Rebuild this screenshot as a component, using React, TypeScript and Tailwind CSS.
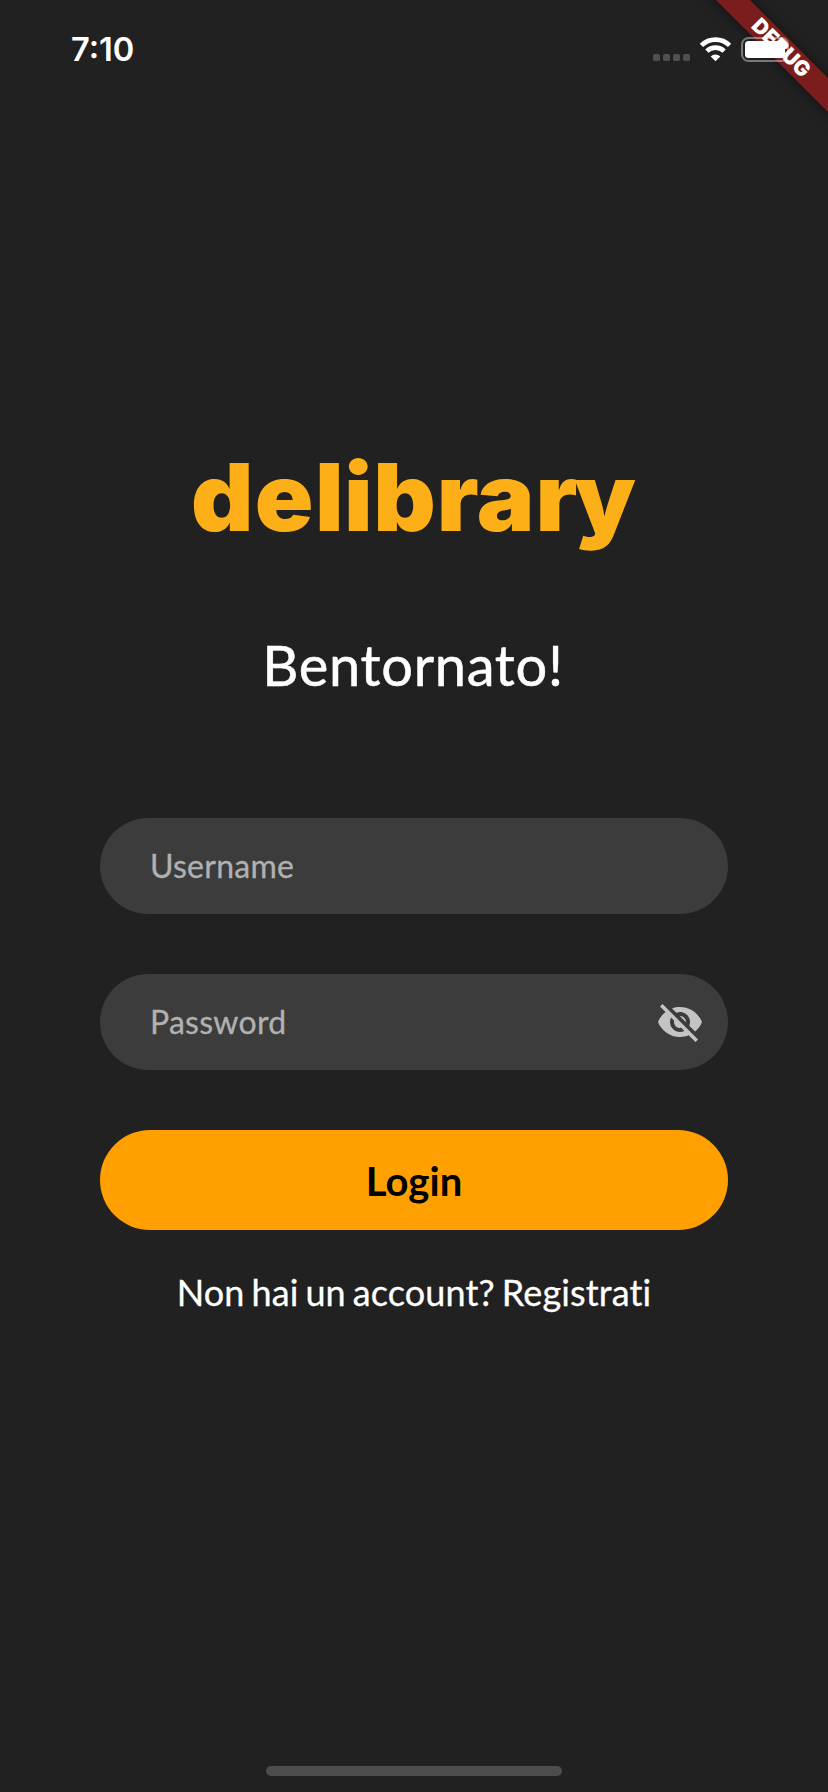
import type { ReactNode } from "react";

const LOGO_LETTERS = [
  { char: "d", x: 185.4 },
  { char: "e", x: 247.3 },
  { char: "l", x: 305.8 },
  { char: "i", x: 334 },
  { char: "b", x: 362.3 },
  { char: "r", x: 424.1 },
  { char: "a", x: 462.9 },
  { char: "r", x: 519.9 },
  { char: "y", x: 557.6 },
];

function StatusIcons() {
  return (
    <svg className="h-16 w-50" viewBox="628 20 200 64" aria-hidden="true">
      {[653, 663, 673, 683].map((x) => (
        <rect key={x} x={x} y="54" width="7" height="7" rx="1.8" fill="#505050" />
      ))}
      <g fill="none" stroke="#fff" strokeWidth="4.6">
        <path d="M701.4 45.4a20 20 0 0 1 28.200 0" />
        <path d="M706.9 51.2a12.2 12.2 0 0 1 17.200 0" />
      </g>
      <path d="M715.5 61.2l-4.800-4.700a6.900 6.900 0 0 1 9.600 0z" fill="#fff" />
      <rect x="742" y="38" width="46" height="23" rx="6.5" fill="none" stroke="#fff" strokeOpacity=".4" strokeWidth="2" />
      <path d="M790.5 45.5c3.600 1.300 3.600 7 0 8.300z" fill="#fff" fillOpacity=".4" />
      <rect x="745" y="41" width="40" height="17" rx="3.5" fill="#fff" />
    </svg>
  );
}

function DebugBanner() {
  return (
    <div className="pointer-events-none absolute top-0 right-0 size-40 overflow-hidden">
      <div className="absolute top-[35.5px] left-[-7.5px] flex h-6 w-[240px] rotate-45 items-center justify-center bg-[#b71c1c]/61 font-['Inter'] text-[21px] font-black text-white shadow-[0_0_12px_rgba(0,0,0,0.5)]">
        DEBUG
      </div>
    </div>
  );
}

function Logo() {
  return (
    <svg className="h-[130px] w-full" viewBox="0 440 828 130" role="img" aria-label="delibrary">
      <text
        transform="scale(1.03 1)"
        x={LOGO_LETTERS.map((l) => l.x).join(" ")}
        y="531"
        fill="#fdaf17"
        className="font-['Inter'] text-[94px] font-black"
      >
        {LOGO_LETTERS.map((l) => l.char).join("")}
      </text>
    </svg>
  );
}

function Field({ label, children }: { label: string; children?: ReactNode }) {
  return (
    <div className="flex h-24 items-center justify-between rounded-full bg-[#3c3c3c] pr-6 pl-[50px] text-[32px] tracking-[0.25px] text-[#b1b1b1] [-webkit-text-stroke:0.3px]">
      <span>{label}</span>
      {children}
    </div>
  );
}

function VisibilityOff() {
  return (
    <svg className="size-12 text-[#c4c4c4]" viewBox="0 0 24 24" fill="currentColor" aria-hidden="true">
      <path d="M12 7c2.760 0 5 2.240 5 5 0 .650-.130 1.260-.360 1.830l2.920 2.920c1.510-1.260 2.700-2.890 3.430-4.750-1.730-4.390-6-7.500-11-7.500-1.400 0-2.740.250-3.980.700l2.160 2.160C10.740 7.130 11.350 7 12 7zM2 4.270l2.280 2.280.460.460C3.080 8.300 1.780 10.020 1 12c1.730 4.390 6 7.500 11 7.500 1.550 0 3.030-.300 4.380-.840l.420.420L19.730 22 21 20.730 3.270 3 2 4.270zM7.530 9.800l1.550 1.550c-.050.210-.080.430-.080.650 0 1.660 1.340 3 3 3 .220 0 .440-.030.650-.080l1.550 1.550c-.670.330-1.410.530-2.200.530-2.760 0-5-2.240-5-5 0-.790.200-1.530.530-2.200zm4.310-.780l3.150 3.150.020-.160c0-1.660-1.340-3-3-3l-.170.010z" />
    </svg>
  );
}

export default function App() {
  return (
    <div className="relative flex h-[1792px] w-[828px] flex-col overflow-hidden bg-[#212121] font-['Lato',sans-serif] text-white">
      <DebugBanner />
      <header className="relative flex h-[440px] items-start justify-between pt-5 pl-[71px]">
        <span className="pt-[9px] font-['Inter'] text-[32.6px] leading-10 font-semibold">7:10</span>
        <StatusIcons />
      </header>
      <Logo />
      <main className="flex flex-col px-[100px]">
        <h1 className="mt-[61px] h-[187px] pr-0.5 text-center text-[56px] leading-[68px] tracking-[0.7px] [-webkit-text-stroke:0.5px]">
          Bentornato!
        </h1>
        <div className="flex flex-col gap-[60px]">
          <Field label="Username" />
          <Field label="Password">
            <VisibilityOff />
          </Field>
          <button className="h-[100px] rounded-full bg-[#ffa000] pt-0.5 text-[40px] font-bold text-black">Login</button>
        </div>
        <p className="mt-10 text-center text-[36px] leading-[44px] tracking-[0.13px] [word-spacing:-2.4px] [-webkit-text-stroke:0.3px]">
          Non hai un account? Registrati
        </p>
      </main>
      <div className="mx-auto mt-auto mb-4 h-2.5 w-[296px] rounded-full bg-[#4d4d4d]" />
    </div>
  );
}
